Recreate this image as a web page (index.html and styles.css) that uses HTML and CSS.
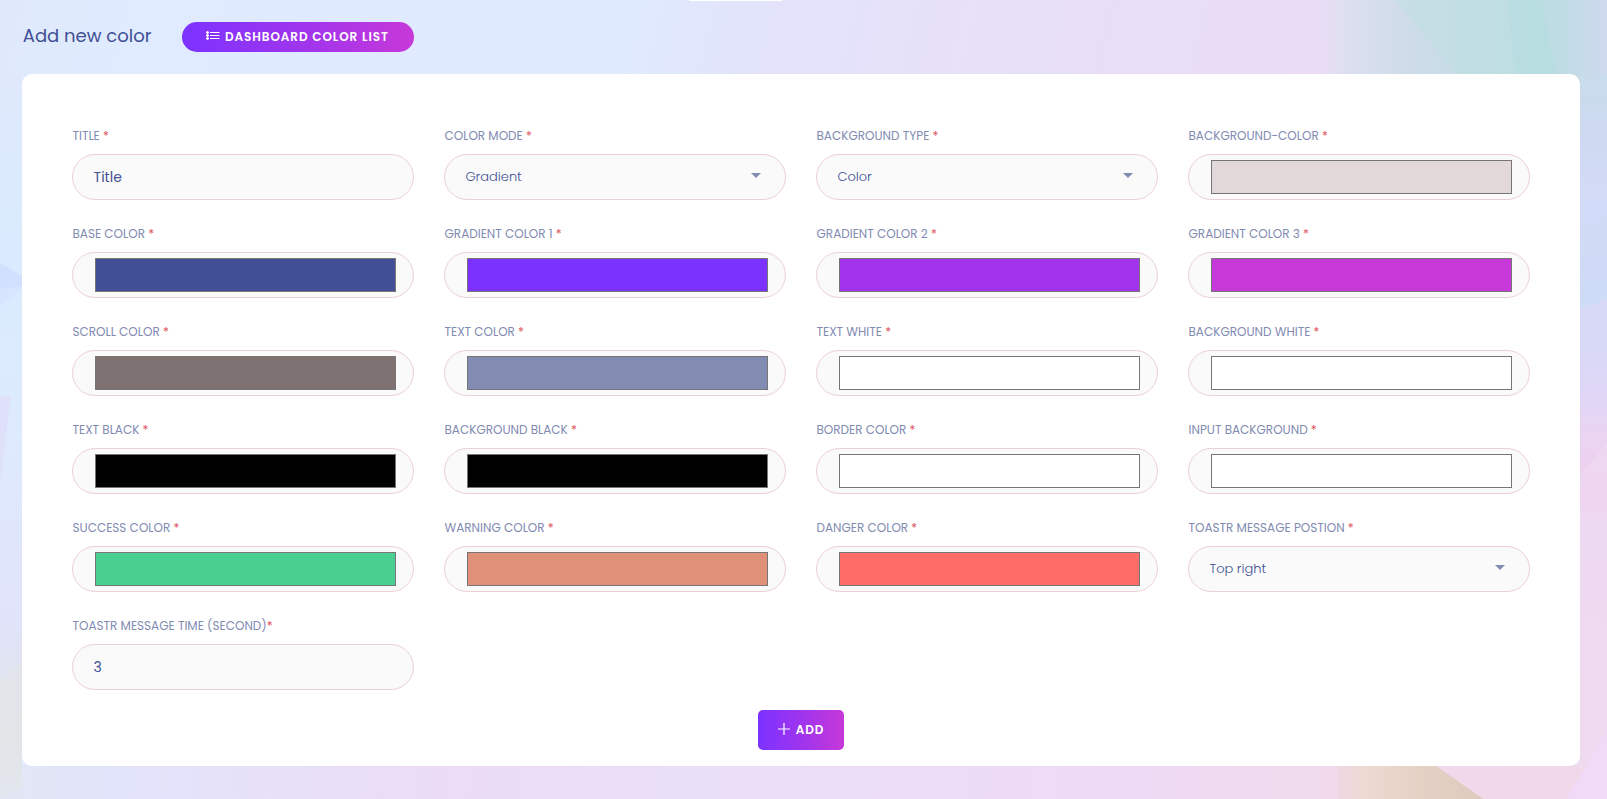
FILE: index.html
```html
<!DOCTYPE html>
<html lang="en">
<head>
<meta charset="utf-8">
<title>Add new color</title>
<link rel="stylesheet" href="styles.css">
</head>
<body>
<svg class="backdrop" viewBox="0 0 1607 799" preserveAspectRatio="none" aria-hidden="true">
  <defs>
    <linearGradient id="base" gradientUnits="userSpaceOnUse" x1="0" y1="0" x2="1340" y2="340">
      <stop offset="0" stop-color="#dfe9fb"/><stop offset=".1" stop-color="#e0ebff"/><stop offset=".44" stop-color="#dfeafe"/><stop offset=".53" stop-color="#e2e4fc"/><stop offset=".7" stop-color="#e7e0f8"/><stop offset=".9" stop-color="#e9ddf5"/><stop offset="1" stop-color="#efdcf7"/>
    </linearGradient>
    <linearGradient id="teal"><stop offset="0" stop-color="#e4def4" stop-opacity="0"/><stop offset=".1" stop-color="#dddff0"/><stop offset=".3" stop-color="#cfdce9"/><stop offset=".55" stop-color="#c3dce6"/><stop offset=".82" stop-color="#bddce3"/><stop offset="1" stop-color="#cfd9ee"/></linearGradient>
    <linearGradient id="edge" x2="0" y2="1">
      <stop offset="0" stop-color="#c8dcec"/><stop offset=".07" stop-color="#cdd9ef"/><stop offset=".15" stop-color="#d2daf6"/><stop offset=".37" stop-color="#cddcf7"/><stop offset=".44" stop-color="#dad8f8"/><stop offset=".5" stop-color="#ead5f1"/><stop offset=".59" stop-color="#f1cbea"/><stop offset=".62" stop-color="#eed8f2"/><stop offset="1" stop-color="#f0d9e5"/>
    </linearGradient>
    <linearGradient id="left" x2="0" y2="1">
      <stop offset="0" stop-color="#dfe9fb"/><stop offset=".25" stop-color="#d9ebff"/><stop offset=".5" stop-color="#deeafd"/><stop offset=".75" stop-color="#e1e3fb"/><stop offset=".85" stop-color="#e0e4ec"/><stop offset=".92" stop-color="#e2e5e8"/><stop offset="1" stop-color="#e2e6f5"/>
    </linearGradient>
    <linearGradient id="sand"><stop offset="0" stop-color="#eed9e2"/><stop offset=".2" stop-color="#ecd9d0"/><stop offset=".55" stop-color="#e6d1c5"/><stop offset="1" stop-color="#dccbbd"/></linearGradient>
    <linearGradient id="bottom"><stop offset="0" stop-color="#e2e6f5"/><stop offset=".06" stop-color="#e2e4fb"/><stop offset=".17" stop-color="#e7e0f8"/><stop offset=".27" stop-color="#ecdcf5"/><stop offset=".42" stop-color="#eadff8"/><stop offset=".7" stop-color="#efdaf6"/><stop offset=".82" stop-color="#f0daec"/><stop offset="1" stop-color="#f0d8e8"/></linearGradient>
  </defs>
  <rect width="1607" height="799" fill="url(#base)"/>
  <rect y="74" width="22" height="725" fill="url(#left)"/>
  <path d="M0 263 24 277v10L0 306z" fill="#d5e3ff" opacity=".7"/>
  <path d="M0 263 24 277v9L0 289z" fill="#cddfff" opacity=".7"/>
  <path d="M0 397l11-2L0 485z" fill="#dfe1fa"/>
  <path d="M0 680l22-20v106h30l-52 33z" fill="#e1e5e8" opacity=".5"/>
  <rect x="22" y="765" width="1585" height="34" fill="url(#bottom)"/>
  <rect x="1315" width="292" height="80" fill="url(#teal)"/>
  <path d="M1395 0h112l9 80h-54z" fill="#bddfe0" opacity=".5"/>
  <path d="M1507 0h35l15 80h-41z" fill="#b4dddf" opacity=".6"/>
  <rect x="1579" y="74" width="28" height="725" fill="url(#edge)"/>
  <path d="M1579 310l28-10v140l-28 36z" fill="#ead4f4" opacity=".35"/>
  <path d="M1579 477l28-34v290l-28 40z" fill="#eedaf2" opacity=".65"/>
  <path d="M1338 765h97l48 34h-145z" fill="url(#sand)"/>
  <path d="M1607 730v69h-41z" fill="#f0daf7"/>
</svg>
<div class="tab-line"></div>

<div class="page">
  <header class="header">
    <h1 class="heading">Add new color</h1>
    <a class="list-button">
      <svg class="list-icon" viewBox="0 0 14 10"><path d="M4 1.5h9.5M4 4.5h9.5M4 7.5h9.5" stroke="#fff" stroke-width="1" fill="none"/><path d="M0 1.5h3M0 4.5h3M0 7.5h3" stroke="#fff" stroke-width="1.6"/><path d="M1.5 0v9" stroke="#fff" stroke-width="1.4" opacity=".8"/></svg>
      <span>DASHBOARD COLOR LIST</span>
    </a>
  </header>

  <main class="card">
    <div class="grid">
      <div class="field"><div class="label">TITLE <b>*</b></div><div class="control text">Title</div></div>
      <div class="field"><div class="label">COLOR MODE <b>*</b></div><div class="control select">Gradient<i class="caret"></i></div></div>
      <div class="field"><div class="label">BACKGROUND TYPE <b>*</b></div><div class="control select">Color<i class="caret"></i></div></div>
      <div class="field"><div class="label">BACKGROUND-COLOR <b>*</b></div><div class="control"><div class="swatch blush"></div></div></div>

      <div class="field"><div class="label">BASE COLOR <b>*</b></div><div class="control"><div class="swatch navy"></div></div></div>
      <div class="field"><div class="label">GRADIENT COLOR 1 <b>*</b></div><div class="control"><div class="swatch violet"></div></div></div>
      <div class="field"><div class="label">GRADIENT COLOR 2 <b>*</b></div><div class="control"><div class="swatch purple"></div></div></div>
      <div class="field"><div class="label">GRADIENT COLOR 3 <b>*</b></div><div class="control"><div class="swatch magenta"></div></div></div>

      <div class="field"><div class="label">SCROLL COLOR <b>*</b></div><div class="control"><div class="swatch taupe"></div></div></div>
      <div class="field"><div class="label">TEXT COLOR <b>*</b></div><div class="control"><div class="swatch slate"></div></div></div>
      <div class="field"><div class="label">TEXT WHITE <b>*</b></div><div class="control"><div class="swatch white"></div></div></div>
      <div class="field"><div class="label">BACKGROUND WHITE <b>*</b></div><div class="control"><div class="swatch white"></div></div></div>

      <div class="field"><div class="label">TEXT BLACK <b>*</b></div><div class="control"><div class="swatch black"></div></div></div>
      <div class="field"><div class="label">BACKGROUND BLACK <b>*</b></div><div class="control"><div class="swatch black"></div></div></div>
      <div class="field"><div class="label">BORDER COLOR <b>*</b></div><div class="control"><div class="swatch white"></div></div></div>
      <div class="field"><div class="label">INPUT BACKGROUND <b>*</b></div><div class="control"><div class="swatch white"></div></div></div>

      <div class="field"><div class="label">SUCCESS COLOR <b>*</b></div><div class="control"><div class="swatch green"></div></div></div>
      <div class="field"><div class="label">WARNING COLOR <b>*</b></div><div class="control"><div class="swatch orange"></div></div></div>
      <div class="field"><div class="label">DANGER COLOR <b>*</b></div><div class="control"><div class="swatch red"></div></div></div>
      <div class="field"><div class="label">TOASTR MESSAGE POSTION <b>*</b></div><div class="control select">Top right<i class="caret"></i></div></div>

      <div class="field"><div class="label">TOASTR MESSAGE TIME (SECOND)<b>*</b></div><div class="control text">3</div></div>
    </div>
    <button class="add-button"><svg class="plus" viewBox="0 0 12 12"><path d="M6 0v12M0 6h12" stroke="#fff" stroke-width="1.2"/></svg><span>ADD</span></button>
  </main>
</div>
</body>
</html>
```
FILE: styles.css
```css
* { box-sizing: border-box; }
body {
  margin: 0;
  height: 799px;
  overflow: hidden;
  font-family: Poppins, Inter, "Liberation Sans", sans-serif;
  color: #415094;
}
.backdrop { position: absolute; inset: 0; width: 100%; height: 100%; z-index: -1; }
.tab-line { position: absolute; left: 689px; top: 0; width: 93px; height: 1px; background: #fff; }
.page { padding: 22px 27px 0 22px; }
.header { display: flex; height: 52px; align-items: flex-start; }
.heading { margin: 0; padding-left: .8px; width: 160px; font-size: 18px; font-weight: 400; line-height: 28px; white-space: nowrap; }
.list-button {
  display: flex; align-items: center; gap: 5px;
  width: 232px; height: 30px; padding-left: 24px;
  border-radius: 15px;
  background: linear-gradient(90deg, #7c32ff, #a235ec 55%, #c738d8);
  color: #fff; font-size: 12px; font-weight: 600; letter-spacing: .93px; white-space: nowrap;
}
.list-icon { width: 14px; height: 10px; margin-bottom: 2px; }
.card { height: 692px; padding: 49px 50px 0; border-radius: 10px; background: #fff; }
.grid { display: grid; grid-template-columns: repeat(4, 342px); grid-auto-rows: 98px; column-gap: 30px; }
.label { height: 31px; padding-left: .5px; font-size: 12px; line-height: 26px; color: #828bb2; white-space: nowrap; }
.label b { font-weight: 400; color: #dc5560; }
.control {
  display: flex; align-items: center;
  height: 46px; padding: 0 17px 0 22px;
  border: 1px solid #ecd0d3; border-radius: 23px;
  background: #fafafa;
}
.text { padding-left: 20.6px; font-size: 14px; }
.select { padding: 0 24px 0 20.4px; justify-content: space-between; font-size: 13px; font-weight: 300; }
.caret { border: 5px solid transparent; border-top-color: #828bb2; border-bottom: 0; margin-bottom: 3px; }
.swatch { width: 301px; height: 34px; border: 1px solid #767676; }
.blush { background: #e2d8d9; }
.navy { background: #415094; }
.violet { background: #7c32ff; }
.purple { background: #a235ec; }
.magenta { background: #c738d8; }
.taupe { background: #7e7172; }
.slate { background: #828bb2; }
.white { background: #fff; }
.black { background: #000; }
.green { background: #4bcf90; }
.orange { background: #e09079; }
.red { background: #ff6d68; }
.add-button {
  display: flex; align-items: center; justify-content: center; gap: 6px;
  width: 86px; height: 40px; margin: -1px auto 0; padding: 0;
  border: 0; border-radius: 5px;
  background: linear-gradient(90deg, #7c32ff, #a235ec 55%, #c738d8);
  color: #fff; font: 600 12px Poppins, Inter, sans-serif; letter-spacing: .9px;
}
.plus { width: 12px; height: 12px; margin-bottom: 2px; }
```
